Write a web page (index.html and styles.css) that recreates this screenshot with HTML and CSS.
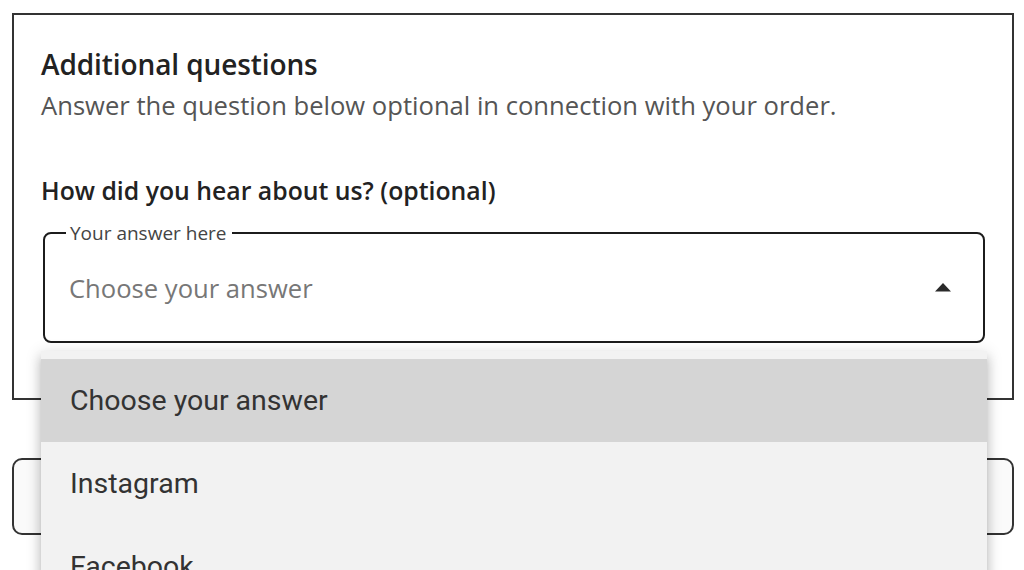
FILE: index.html
```html
<!DOCTYPE html>
<html lang="en">
<head>
<meta charset="utf-8">
<title>Additional questions</title>
<link rel="stylesheet" href="styles.css">
</head>
<body>
<div class="page">
  <section class="card">
    <h2 class="title">Additional questions</h2>
    <p class="subtitle">Answer the question below optional in connection with your order.</p>
    <h3 class="question">How did you hear about us? (optional)</h3>
    <div class="select-wrap">
      <fieldset class="select">
        <legend class="select-legend">Your answer here</legend>
        <div class="select-row">
          <span class="placeholder">Choose your answer</span>
          <svg class="arrow" width="18" height="10" viewBox="0 0 18 10"><path d="M1 9.5 L9 1 L17 9.5 Z" fill="#2a2a2a"/></svg>
        </div>
      </fieldset>
      <ul class="menu">
        <li class="option selected">Choose your answer</li>
        <li class="option">Instagram</li>
        <li class="option">Facebook</li>
        <li class="option">Google</li>
      </ul>
    </div>
  </section>
  <div class="button-box"></div>
</div>
</body>
</html>
```

FILE: styles.css
```css
html, body {
  margin: 0;
  padding: 0;
  height: 100%;
  background: #ffffff;
  overflow: hidden;
}

.page {
  padding: 13px 10px 0 12px;
  font-family: "Open Sans", "Noto Sans", sans-serif;
  color: #222;
}

.card {
  border: 2px solid #333;
  height: 383px;
  padding: 0 27px;
  box-sizing: content-box;
}

.title {
  margin: 0;
  padding-top: 31px;
  font-size: 28px;
  line-height: 36px;
  font-weight: 600;
  letter-spacing: -0.1px;
  color: #222;
}

.subtitle {
  margin: 8px 0 0;
  font-size: 25.6px;
  line-height: 32px;
  letter-spacing: 0;
  color: #555;
}

.question {
  margin: 52px 0 0;
  font-size: 24.8px;
  line-height: 32px;
  font-weight: 600;
  letter-spacing: 0;
  color: #222;
}

.select-wrap {
  position: relative;
  margin: 16px 0 0 2px;
}

.select {
  margin: 0;
  padding: 0 26px 0 24px;
  border: 2px solid #1c1c1c;
  border-radius: 8px;
  height: 121px;
  box-sizing: border-box;
  min-width: 0;
}

.select-legend {
  padding: 0 5px 0 4px;
  margin-left: -3px;
  font-size: 19px;
  line-height: 22px;
  color: #444;
}

.select-row {
  display: flex;
  align-items: center;
  justify-content: space-between;
  height: 97px;
  padding-bottom: 8px;
  box-sizing: border-box;
}

.placeholder {
  font-size: 25.6px;
  color: #777;
}

.arrow {
  display: block;
  margin-top: -3px;
  margin-right: 5px;
}

.menu {
  position: absolute;
  top: 129px;
  left: -2px;
  width: 946px;
  height: 230px;
  overflow: hidden;
  margin: 0;
  padding: 8px 0 0;
  list-style: none;
  background: #f2f2f2;
  box-sizing: border-box;
  box-shadow: 0 5px 5px -3px rgba(0,0,0,0.2), 0 8px 10px 1px rgba(0,0,0,0.14), 0 3px 14px 2px rgba(0,0,0,0.12);
  font-family: Roboto, "Noto Sans", sans-serif;
}

.option {
  height: 83px;
  display: flex;
  align-items: center;
  padding-left: 29px;
  font-size: 28.5px;
  color: #333;
}

.option.selected {
  background: #d5d5d5;
}

.button-box {
  margin-top: 58px;
  height: 73px;
  border: 2px solid #333;
  border-radius: 10px;
  background: #fafafa;
}
```
